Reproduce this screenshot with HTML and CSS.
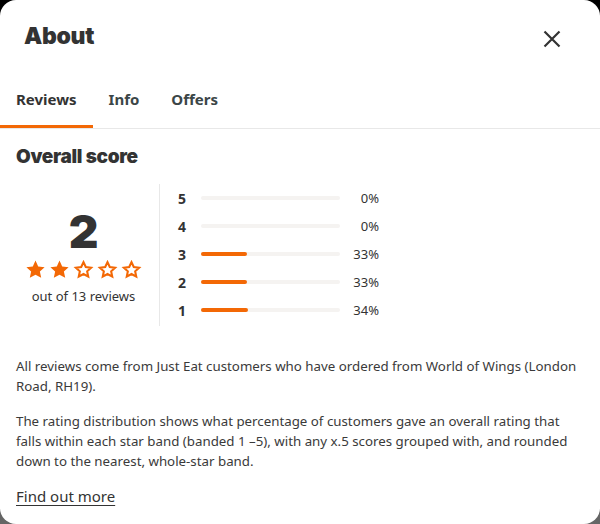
FILE: index.html
```html
<!DOCTYPE html>
<html lang="en">
<head>
<meta charset="utf-8">
<title>About</title>
<link rel="stylesheet" href="styles.css">
</head>
<body>
<div class="modal">
  <div class="header">
    <h1 class="title">About</h1>
    <button class="close" aria-label="Close">
      <svg width="18" height="18" viewBox="0 0 18 18"><path d="M1.5 1.5 L16.5 16.5 M16.5 1.5 L1.5 16.5" stroke="#333" stroke-width="2.2" fill="none"/></svg>
    </button>
  </div>
  <div class="tabs">
    <div class="tab active">Reviews</div>
    <div class="tab">Info</div>
    <div class="tab">Offers</div>
  </div>
  <div class="content">
    <h2 class="section-title">Overall score</h2>
    <div class="rating">
      <div class="score">
        <div class="score-num">2</div>
        <div class="stars">
          <svg class="star" viewBox="0 0 24 24"><path class="full" d="M12 1.8l3.1 6.7 7.3.8-5.4 5 1.5 7.2L12 17.9l-6.5 3.6 1.5-7.2-5.4-5 7.3-.8z"/></svg>
          <svg class="star" viewBox="0 0 24 24"><path class="full" d="M12 1.8l3.1 6.7 7.3.8-5.4 5 1.5 7.2L12 17.9l-6.5 3.6 1.5-7.2-5.4-5 7.3-.8z"/></svg>
          <svg class="star" viewBox="0 0 24 24"><path class="empty" d="M12 3.6l2.6 5.6 6.1.7-4.5 4.2 1.2 6-5.4-3-5.4 3 1.2-6-4.5-4.2 6.1-.7z"/></svg>
          <svg class="star" viewBox="0 0 24 24"><path class="empty" d="M12 3.6l2.6 5.6 6.1.7-4.5 4.2 1.2 6-5.4-3-5.4 3 1.2-6-4.5-4.2 6.1-.7z"/></svg>
          <svg class="star" viewBox="0 0 24 24"><path class="empty" d="M12 3.6l2.6 5.6 6.1.7-4.5 4.2 1.2 6-5.4-3-5.4 3 1.2-6-4.5-4.2 6.1-.7z"/></svg>
        </div>
        <div class="score-count">out of 13 reviews</div>
      </div>
      <div class="bars">
        <div class="row"><span class="band">5</span><span class="track"><span class="fill" style="width:0%"></span></span><span class="pct">0%</span></div>
        <div class="row"><span class="band">4</span><span class="track"><span class="fill" style="width:0%"></span></span><span class="pct">0%</span></div>
        <div class="row"><span class="band">3</span><span class="track"><span class="fill" style="width:33%"></span></span><span class="pct">33%</span></div>
        <div class="row"><span class="band">2</span><span class="track"><span class="fill" style="width:33%"></span></span><span class="pct">33%</span></div>
        <div class="row"><span class="band">1</span><span class="track"><span class="fill" style="width:34%"></span></span><span class="pct">34%</span></div>
      </div>
    </div>
    <p class="text">All reviews come from Just Eat customers who have ordered from World of Wings (London Road, RH19).</p>
    <p class="text">The rating distribution shows what percentage of customers gave an overall rating that falls within each star band (banded 1 –5), with any x.5 scores grouped with, and rounded down to the nearest, whole-star band.</p>
    <a class="more" href="#">Find out more</a>
  </div>
</div>
</body>
</html>
```
FILE: styles.css
```css
* { box-sizing: border-box; }
html, body { margin: 0; padding: 0; }
body {
  width: 600px;
  height: 524px;
  background: linear-gradient(#000 0%, #333 60%, #666 100%);
  font-family: "Noto Sans", "Liberation Sans", sans-serif;
  color: #333;
  overflow: hidden;
}
.modal {
  width: 600px;
  height: 524px;
  background: #fff;
  border-radius: 16px;
  overflow: hidden;
}
.header {
  display: flex;
  justify-content: space-between;
  align-items: flex-start;
  padding: 20px 39px 0 24px;
  height: 76px;
}
.title {
  margin: 0;
  font-family: Inter, Lato, "Liberation Sans", sans-serif;
  font-weight: 900;
  font-size: 23px;
  line-height: 32px;
  color: #333;
  letter-spacing: -0.3px;
}
.close {
  border: 0;
  background: none;
  padding: 0;
  margin-top: 10px;
  width: 18px;
  height: 18px;
  display: flex;
}
.tabs {
  display: flex;
  border-bottom: 1px solid #e8e8e8;
}
.tab {
  padding: 12px 16px 15px;
  font-family: "Noto Sans", sans-serif;
  font-weight: 700;
  font-size: 15px;
  line-height: 22px;
  color: #3b4647;
  border-bottom: 3px solid transparent;
}
.tab.active {
  color: #333;
  border-bottom-color: #f36805;
  border-radius: 0 2px 0 0;
}
.content {
  padding: 0 16px;
}
.section-title {
  margin: 15px 0 14px;
  font-family: Inter, Lato, sans-serif;
  font-weight: 900;
  font-size: 19px;
  line-height: 26px;
  color: #333;
  letter-spacing: -0.3px;
}
.rating {
  display: flex;
  height: 142px;
}
.score {
  width: 144px;
  display: flex;
  flex-direction: column;
  align-items: center;
  padding: 24px 8px 0 0;
  border-right: 1px solid #e8e8e8;
}
.score-num {
  font-family: Inter, Lato, sans-serif;
  font-weight: 900;
  font-size: 46px;
  line-height: 46px;
  color: #333;
}
.stars {
  display: flex;
  gap: 3px;
  margin-top: 5px;
}
.star { width: 21px; height: 21px; }
.star .full { fill: #f36805; }
.star .empty { fill: none; stroke: #f36805; stroke-width: 2.4; stroke-linejoin: miter; }
.score-count {
  margin-top: 7px;
  font-size: 13px;
  line-height: 18px;
  color: #333;
}
.bars {
  padding-left: 18px;
  display: flex;
  flex-direction: column;
}
.row {
  height: 28px;
  display: flex;
  align-items: center;
}
.band {
  width: 23px;
  font-weight: 700;
  font-size: 14px;
  color: #333;
}
.track {
  width: 139px;
  height: 4px;
  border-radius: 2px;
  background: #f5f3f1;
  display: block;
}
.fill {
  display: block;
  height: 4px;
  border-radius: 2px;
  background: #f36805;
}
.pct {
  width: 39px;
  text-align: right;
  font-size: 13px;
  color: #333;
}
.text {
  margin: 30px 0 0;
  font-size: 13.3px;
  line-height: 20px;
  color: #3a3a3a;
}
.text + .text { margin-top: 15px; }
.more {
  display: inline-block;
  margin-top: 15px;
  font-size: 15px;
  line-height: 20px;
  color: #333;
  text-decoration: underline;
  text-underline-offset: 3px;
}
```
